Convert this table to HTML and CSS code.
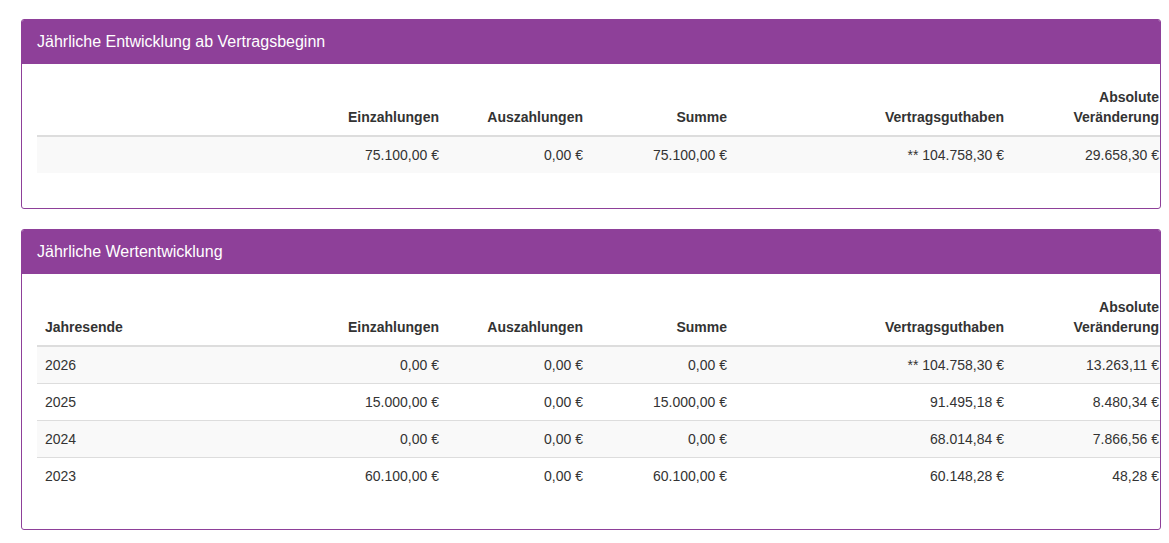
FILE: index.html
```html
<!DOCTYPE html>
<html lang="de">
<head>
<meta charset="utf-8">
<title>Wertentwicklung</title>
<link rel="stylesheet" href="styles.css">
</head>
<body>
<div class="page">
  <section class="panel">
    <div class="panel-heading">Jährliche Entwicklung ab Vertragsbeginn</div>
    <div class="panel-body">
      <table class="data">
        <colgroup>
          <col class="c1"><col class="c2"><col class="c3"><col class="c4"><col class="c5"><col class="c6"><col class="c7">
        </colgroup>
        <thead>
          <tr>
            <th class="l"></th>
            <th>Einzahlungen</th>
            <th>Auszahlungen</th>
            <th>Summe</th>
            <th>Vertragsguthaben</th>
            <th>Absolute<br>Veränderung</th>
            <th>Performance</th>
          </tr>
        </thead>
        <tbody>
          <tr>
            <td class="l"></td>
            <td>75.100,00 €</td>
            <td>0,00 €</td>
            <td>75.100,00 €</td>
            <td>** 104.758,30 €</td>
            <td>29.658,30 €</td>
            <td>* 13,74 %</td>
          </tr>
        </tbody>
      </table>
    </div>
  </section>

  <section class="panel">
    <div class="panel-heading">Jährliche Wertentwicklung</div>
    <div class="panel-body">
      <table class="data">
        <colgroup>
          <col class="c1"><col class="c2"><col class="c3"><col class="c4"><col class="c5"><col class="c6"><col class="c7">
        </colgroup>
        <thead>
          <tr>
            <th class="l">Jahresende</th>
            <th>Einzahlungen</th>
            <th>Auszahlungen</th>
            <th>Summe</th>
            <th>Vertragsguthaben</th>
            <th>Absolute<br>Veränderung</th>
            <th>Performance</th>
          </tr>
        </thead>
        <tbody>
          <tr>
            <td class="l">2026</td>
            <td>0,00 €</td>
            <td>0,00 €</td>
            <td>0,00 €</td>
            <td>** 104.758,30 €</td>
            <td>13.263,11 €</td>
            <td>* 14,50 %</td>
          </tr>
          <tr>
            <td class="l">2025</td>
            <td>15.000,00 €</td>
            <td>0,00 €</td>
            <td>15.000,00 €</td>
            <td>91.495,18 €</td>
            <td>8.480,34 €</td>
            <td>11,08 %</td>
          </tr>
          <tr>
            <td class="l">2024</td>
            <td>0,00 €</td>
            <td>0,00 €</td>
            <td>0,00 €</td>
            <td>68.014,84 €</td>
            <td>7.866,56 €</td>
            <td>12,97 %</td>
          </tr>
          <tr>
            <td class="l">2023</td>
            <td>60.100,00 €</td>
            <td>0,00 €</td>
            <td>60.100,00 €</td>
            <td>60.148,28 €</td>
            <td>48,28 €</td>
            <td>0,08 %</td>
          </tr>
        </tbody>
      </table>
    </div>
  </section>
</div>
</body>
</html>
```

FILE: styles.css
```css
html, body {
  margin: 0;
  padding: 0;
  background: #ffffff;
}

body {
  font-family: "Liberation Sans", Arial, Helvetica, sans-serif;
  font-size: 14px;
  line-height: 20px;
  color: #333333;
}

.page {
  padding: 19px 0 0 21px;
  width: 1140px;
}

.panel {
  border: 1px solid #8e4099;
  border-radius: 3px;
  margin-bottom: 20px;
  background: #ffffff;
  overflow: hidden;
}

.panel-heading {
  background: #8e4099;
  color: #ffffff;
  font-size: 16px;
  line-height: 20px;
  padding: 12px 15px 12px 15px;
}

.panel-body {
  padding: 15px;
}

.data {
  width: 100%;
  border-collapse: collapse;
  border-spacing: 0;
  table-layout: fixed;
  margin-bottom: 20px;
}

.c1 { width: 266px; }
.c2 { width: 144px; }
.c3 { width: 144px; }
.c4 { width: 144px; }
.c5 { width: 277px; }
.c6 { width: 155px; }
.c7 { width: 122px; }

.data th,
.data td {
  padding: 8px;
  text-align: right;
  white-space: nowrap;
}

.data th {
  font-weight: bold;
  vertical-align: bottom;
  border-bottom: 2px solid #dddddd;
}

.data td {
  vertical-align: top;
  border-top: 1px solid #dddddd;
}

.data tbody tr:first-child td {
  border-top: 0;
}

.data tbody tr:nth-child(odd) {
  background: #f9f9f9;
}

.data .l {
  text-align: left;
}
```
